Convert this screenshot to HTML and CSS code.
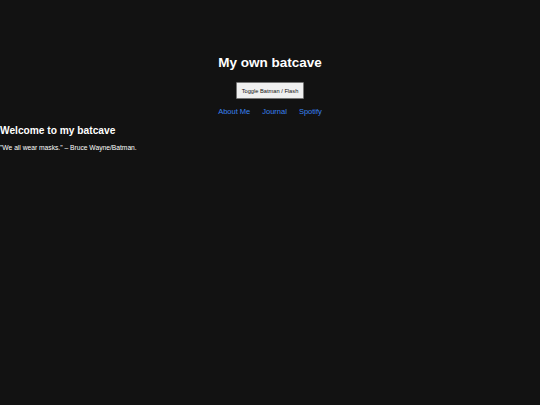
FILE: index.html
```html
<!DOCTYPE html>
<html>
<head>
<meta charset="utf-8">
<link rel="stylesheet" href="styles.css">
</head>
<body>
<header class="top">
  <h1 class="title">My own batcave</h1>
  <button class="toggle">Toggle Batman / Flash</button>
  <nav class="nav">
    <a href="#">About Me</a>
    <a href="#">Journal</a>
    <a href="#">Spotify</a>
  </nav>
</header>
<main class="content">
  <h2 class="welcome">Welcome to my batcave</h2>
  <p class="quote">"We all wear masks." – Bruce Wayne/Batman.</p>
</main>
</body>
</html>
```
FILE: styles.css
```css
html, body {
  margin: 0;
  padding: 0;
  background: #121212;
  color: #ffffff;
  font-family: "Liberation Sans", Arial, sans-serif;
}
.top {
  display: flex;
  flex-direction: column;
  align-items: center;
  padding-top: 55px;
}
.title {
  margin: 0;
  font-size: 13.5px;
  font-weight: bold;
  line-height: 16px;
}
.toggle {
  margin-top: 11px;
  height: 17px;
  padding: 0 5px;
  font-family: "Liberation Sans", Arial, sans-serif;
  font-size: 5.7px;
  color: #111;
  background: #efefef;
  border: 1px solid #767676;
  border-radius: 1px;
}
.nav {
  display: flex;
  gap: 12px;
  margin-top: 8px;
}
.nav a {
  color: #3a82f0;
  text-decoration: none;
  font-size: 7.5px;
  line-height: 10px;
}
.content {
  padding-top: 8px;
}
.welcome {
  margin: 0;
  font-size: 10.2px;
  line-height: 12px;
}
.quote {
  margin: 7px 0 0;
  font-size: 6.7px;
  line-height: 8px;
}
```
